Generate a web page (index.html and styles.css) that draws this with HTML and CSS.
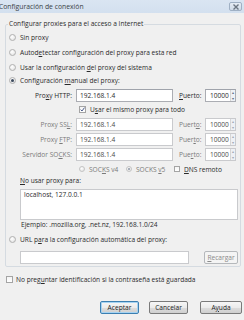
FILE: index.html
```html
<!DOCTYPE html>
<html lang="es">
<head>
<meta charset="utf-8">
<title>Configuración de conexión</title>
<link rel="stylesheet" href="styles.css">
</head>
<body>
<div class="window">
  <div class="titlebar">
    <span class="title">Configuración de conexión</span>
    <span class="close"><svg width="8" height="6" viewBox="0 0 8 6"><path d="M1.5 0.5 L6.5 5.5 M6.5 0.5 L1.5 5.5" stroke="#6b7581" stroke-width="1.4"/></svg></span>
  </div>
  <div class="content">
    <fieldset class="group">
      <legend class="legend">Configurar proxies para el acceso a Internet</legend>
      <div class="row r1"><span class="radio"></span><span>Sin proxy</span></div>
      <div class="row r2"><span class="radio"></span><span>Autod<u>e</u>tectar configuración del proxy para esta red</span></div>
      <div class="row r3"><span class="radio"></span><span>Usar la configuración <u>d</u>el proxy del sistema</span></div>
      <div class="row r4"><span class="radio checked"></span><span>Configuración <u>m</u>anual del proxy:</span></div>
      <div class="prow r5">
        <span class="plabel">Pro<u>x</u>y HTTP:</span>
        <span class="input host">192.168.1.4</span>
        <span class="port-label"><u>P</u>uerto:</span>
        <span class="input port">10000<span class="spin"><i>▴</i><i>▾</i></span></span>
      </div>
      <div class="row crow r6"><span class="check on"><svg width="5" height="5" viewBox="0 0 5 5"><path d="M0.6 2.6 L2 4 L4.5 0.6" fill="none" stroke="#4a5a8a" stroke-width="1"/></svg></span><span>U<u>s</u>ar el mismo proxy para todo</span></div>
      <div class="prow dis r7">
        <span class="plabel">Proxy SS<u>L</u>:</span>
        <span class="input host">192.168.1.4</span>
        <span class="port-label">Puert<u>o</u>:</span>
        <span class="input port">10000<span class="spin"><i>▴</i><i>▾</i></span></span>
      </div>
      <div class="prow dis r8">
        <span class="plabel">Proxy <u>F</u>TP:</span>
        <span class="input host">192.168.1.4</span>
        <span class="port-label">Puer<u>t</u>o:</span>
        <span class="input port">10000<span class="spin"><i>▴</i><i>▾</i></span></span>
      </div>
      <div class="prow dis r9">
        <span class="plabel">Servidor SO<u>C</u>KS:</span>
        <span class="input host">192.168.1.4</span>
        <span class="port-label">Pue<u>r</u>to:</span>
        <span class="input port">10000<span class="spin"><i>▴</i><i>▾</i></span></span>
      </div>
      <div class="srow r10">
        <span class="radio sm"></span><span class="grey v4">SOC<u>K</u>S v4</span>
        <span class="radio sm checked"></span><span class="grey v5">SOCKS <u>v</u>5</span>
        <span class="check"></span><span><u>D</u>NS remoto</span>
      </div>
      <div class="label-line r11"><u>N</u>o usar proxy para:</div>
      <div class="textarea">localhost, 127.0.0.1</div>
      <div class="example">Ejemplo: .mozilla.org, .net.nz, 192.168.1.0/24</div>
      <div class="row r12"><span class="radio"></span><span>URL p<u>a</u>ra la configuración automática del proxy:</span></div>
      <div class="urlrow">
        <span class="input url"></span>
        <span class="btn disabled"><u>R</u>ecargar</span>
      </div>
    </fieldset>
    <div class="row bottom-check"><span class="check"></span><span>No preg<u>u</u>ntar identificación si la contraseña está guardada</span></div>
    <div class="buttons">
      <span class="btn default">Aceptar</span>
      <span class="btn">Cancelar</span>
      <span class="btn wide">A<u>y</u>uda</span>
    </div>
  </div>
</div>
</body>
</html>
```
FILE: styles.css
```css
* { box-sizing: border-box; }
html, body { margin: 0; padding: 0; }
body {
  width: 244px;
  height: 320px;
  overflow: hidden;
  background: #f0f0f0;
  font-family: "Open Sans", "Noto Sans", sans-serif;
  font-size: 6.6px;
  color: #2a2a2a;
}
u { text-decoration: underline; text-underline-offset: 1px; }
.window { width: 244px; height: 320px; display: flex; flex-direction: column; }
.titlebar {
  height: 13px;
  background: linear-gradient(#dae5f2, #d3e0ef);
  display: flex;
  justify-content: space-between;
  align-items: center;
  color: #3a3f46;
  font-size: 6.8px;
}
.title { margin-left: -1px; }
.close {
  width: 13px; height: 9px;
  margin-right: 2px;
  border: 1px solid #9fb0c4;
  border-radius: 2px;
  background: linear-gradient(#e6edf5, #cfdae7);
  display: flex; align-items: center; justify-content: center;
}
.content { padding: 0 3px 0 5px; display: flex; flex-direction: column; }
.group {
  margin: 6px 0 0 0;
  padding: 0 0 3px 0;
  border: 1px solid #d5dbe1;
  border-radius: 2px;
  min-width: 0;
  height: 248px;
}
.legend {
  padding: 0 1px;
  margin-left: 2px;
  height: 10px;
  line-height: 10px;
  color: #2a2a2a;
}
.row { display: flex; align-items: center; height: 12px; padding-left: 3px; }
.row > span + span { margin-left: 4px; }
.radio {
  width: 7px; height: 7px; border-radius: 50%;
  border: 1px solid #b0b0b0;
  background: radial-gradient(circle at 40% 35%, #ffffff, #dedede);
  flex: none;
  display: inline-flex; align-items: center; justify-content: center;
}
.radio.checked::after {
  content: ""; width: 3px; height: 3px; border-radius: 50%; background: #3c4a5e;
}
.check {
  width: 7px; height: 7px; border: 1px solid #a4a4a4; background: linear-gradient(#f4f4f4, #ffffff);
  flex: none; display: inline-flex; align-items: center; justify-content: center;
}
.r1 { margin-top: 2px; }
.r2 { margin-top: 3px; }
.r3 { margin-top: 3px; }
.r4 { margin-top: 1px; }
.prow { display: flex; align-items: center; height: 13px; }
.r5 { margin-top: 3px; }
.r6 { margin-top: 1px; padding-left: 73px; }
.r7 { margin-top: 3px; }
.r8 { margin-top: 2px; }
.r9 { margin-top: 2px; }
.plabel { width: 66px; text-align: right; flex: none; }
.input {
  height: 13px;
  border: 1px solid #abadb3;
  border-top-color: #9fa3ab;
  background: #fff;
  display: flex; align-items: center;
  padding-left: 3px;
  flex: none;
  color: #2a2a2a;
}
.host { width: 97px; margin-left: 4px; }
.port-label { width: 22px; margin-left: 6px; flex: none; }
.port { width: 31px; margin-left: 4px; padding-left: 4px; }
.spin {
  margin-left: auto;
  width: 5px; height: 11px;
  display: flex; flex-direction: column;
  border-left: 1px solid #d6d6d6;
}
.spin i {
  font-style: normal; font-size: 4px; line-height: 5px; height: 5.5px;
  text-align: center; color: #5a6a82; background: #eef1f5;
}
.dis .plabel, .dis .port-label { color: #7a7a7a; }
.dis .input { border-color: #c9cacd; color: #4a4a4a; }
.dis .spin i { color: #a0a8b4; }
.srow { display: flex; align-items: center; height: 10px; margin-top: 3px; padding-left: 73px; }
.radio.sm { width: 6px; height: 6px; border-color: #c4c4c4; }
.radio.sm.checked::after { width: 2px; height: 2px; background: #8a94a3; }
.grey { color: #7a7a7a; margin-left: 4px; }
.v4 { width: 37px; }
.v5 { width: 38px; }
.srow .check { width: 6px; height: 6px; }
.srow .check + span { margin-left: 4px; }
.label-line { height: 10px; line-height: 10px; margin-top: 2px; padding-left: 14px; }
.textarea {
  margin: 3px 0 0 14px;
  width: 218px; height: 31px;
  background: #fff;
  border: 1px solid #c9cacd;
  padding: 1px 3px;
  line-height: 8px;
}
.example { height: 10px; line-height: 10px; padding-left: 15px; }
.r12 { margin-top: 3px; }
.urlrow { display: flex; align-items: center; margin-top: 6px; padding-left: 14px; height: 13px; }
.url { width: 169px; border-color: #c9cacd; }
.btn {
  height: 13px;
  border: 1px solid #7a7a7a;
  border-radius: 2px;
  background: linear-gradient(#f6f6f6 0%, #ebebeb 50%, #dddddd 51%, #cfcfcf 100%);
  display: flex; align-items: center; justify-content: center;
  color: #222;
  flex: none;
}
.urlrow .btn { width: 34px; margin-left: 15px; }
.btn.disabled { border-color: #b5b8bb; background: #f4f4f4; color: #8a8a8a; }
.bottom-check { margin-top: 7px; padding-left: 1px; height: 10px; }
.bottom-check > span + span { margin-left: 3px; }
.buttons { display: flex; margin-top: 17px; padding-left: 95px; }
.buttons .btn { width: 39px; }
.buttons .btn + .btn { margin-left: 10px; }
.buttons .btn.wide { width: 42px; margin-left: 12px; }
.btn.default { border-color: #3c7fb1; box-shadow: inset 0 0 0 1px #a6d3f2; }
```
